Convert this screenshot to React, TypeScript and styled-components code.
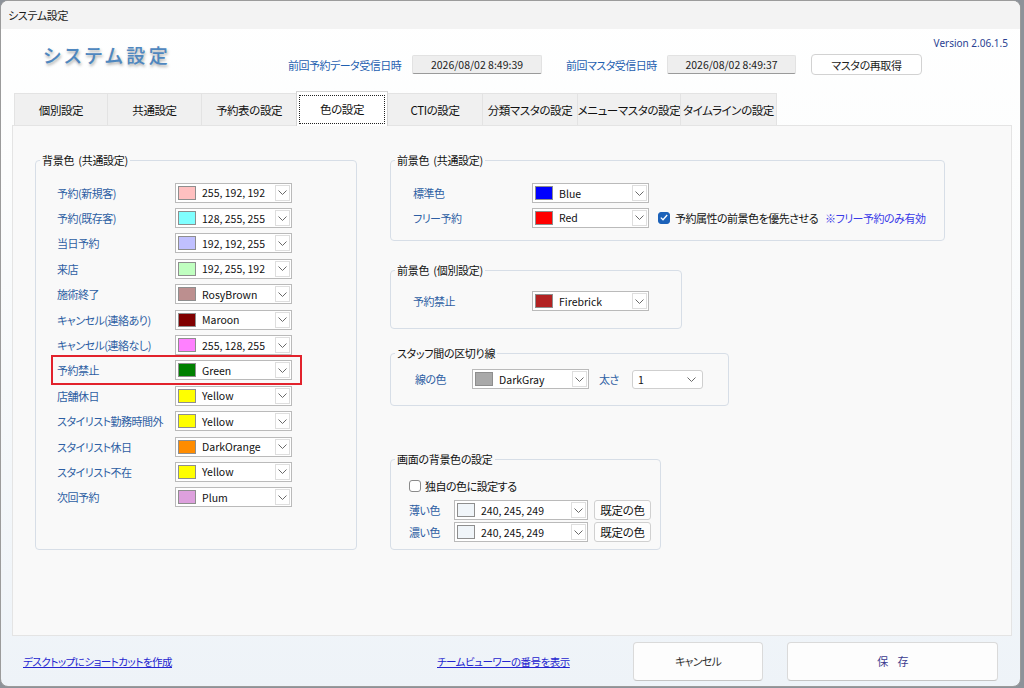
import React from "react";
import styled, { createGlobalStyle } from "styled-components";

const GlobalStyle = createGlobalStyle`
  html, body {
    margin: 0;
    padding: 0;
    background: #8d9299;
  }
  body {
    font-family: "Noto Sans CJK JP", "Noto Sans", sans-serif;
    font-feature-settings: "palt";
  }
  #root {
    width: 1024px;
    height: 688px;
  }
`;

const Window = styled.div`
  width: 1021px;
  height: 687px;
  box-sizing: border-box;
  border: 1px solid #9b9b9b;
  border-radius: 8px;
  overflow: hidden;
  display: flex;
  flex-direction: column;
  background: linear-gradient(#ffffff 0%, #fcfdfd 25%, #eef3f8 100%);
`;

const TitleBar = styled.div`
  height: 28px;
  flex: none;
  background: #f3f3f3;
  display: flex;
  align-items: center;
  padding-left: 7px;
  font-size: 11px;
  letter-spacing: -0.3px;
  color: #1a1a1a;
`;

const Header = styled.div`
  height: 63px;
  flex: none;
  display: flex;
  align-items: flex-start;
  padding-left: 42px;
`;

const AppTitle = styled.div`
  width: 245px;
  margin-top: 14px;
  font-size: 19px;
  line-height: 24px;
  letter-spacing: 3.5px;
  font-weight: 500;
  color: #4f87bf;
  text-shadow: 1px 2px 3px rgba(50, 50, 50, 0.4);
`;

const InfoRow = styled.div`
  display: flex;
  align-items: center;
  height: 21px;
  margin-top: 25px;
`;

const InfoLabel = styled.span<{ $w: number }>`
  width: ${(p) => p.$w}px;
  font-size: 11px;
  letter-spacing: -0.5px;
  color: #1f5fb0;
  white-space: nowrap;
`;

const InfoValue = styled.div<{ $w: number; $mr: number }>`
  width: ${(p) => p.$w}px;
  margin-right: ${(p) => p.$mr}px;
  height: 19px;
  box-sizing: border-box;
  background: #eeeeee;
  border: 1px solid #e2e2e2;
  border-bottom-color: #9a9a9a;
  border-radius: 2px;
  font-size: 10.5px;
  color: #222;
  display: flex;
  align-items: center;
  justify-content: center;
`;

const HeaderButton = styled.div`
  width: 111px;
  height: 21px;
  box-sizing: border-box;
  background: #fff;
  border: 1px solid #d2d2d2;
  border-radius: 4px;
  font-size: 11px;
  letter-spacing: -0.4px;
  color: #222;
  display: flex;
  align-items: center;
  justify-content: center;
`;

const Version = styled.div`
  margin-left: auto;
  margin-top: 6px;
  padding-right: 12px;
  font-size: 10px;
  line-height: 16px;
  color: #2a3f92;
  font-family: "Noto Sans", sans-serif;
`;

const TabStrip = styled.div`
  height: 33px;
  flex: none;
  display: flex;
  align-items: flex-end;
  padding-left: 13px;
`;

const Tab = styled.div<{ $w: number; $active?: boolean }>`
  width: ${(p) => p.$w}px;
  height: ${(p) => (p.$active ? 35 : 32)}px;
  box-sizing: border-box;
  margin-right: -1px;
  margin-bottom: ${(p) => (p.$active ? -1 : 0)}px;
  position: relative;
  z-index: ${(p) => (p.$active ? 2 : 1)};
  background: ${(p) => (p.$active ? "#ffffff" : "#f0f0f0")};
  border: 1px solid ${(p) => (p.$active ? "#d4d4d4" : "#e3e3e3")};
  border-bottom: none;
  display: flex;
  align-items: center;
  justify-content: center;
  font-size: 11.5px;
  letter-spacing: -0.4px;
  white-space: nowrap;
  color: #111;
`;

const FocusRect = styled.span`
  width: calc(100% - 4px);
  height: calc(100% - 5px);
  box-sizing: border-box;
  border: 1px dotted #222;
  display: flex;
  align-items: center;
  justify-content: center;
`;

const Panel = styled.div`
  margin-left: 11px;
  width: 1000px;
  height: 511px;
  flex: none;
  box-sizing: border-box;
  background: #f9f9f9;
  border: 1px solid #e4e4e4;
  display: flex;
  align-items: flex-start;
  gap: 33px;
  padding: 26px 0 0 22px;
`;

const Column = styled.div`
  display: flex;
  flex-direction: column;
`;

const Group = styled.fieldset<{ $w: number; $h: number; $mt?: number }>`
  margin: ${(p) => p.$mt ?? 0}px 0 0 0;
  min-width: 0;
  padding: 0;
  box-sizing: border-box;
  width: ${(p) => p.$w}px;
  height: ${(p) => p.$h}px;
  border: 1px solid #d7dee7;
  border-radius: 4px;
`;

const Legend = styled.legend`
  margin-left: 4px;
  padding: 0 2px;
  font-size: 11px;
  letter-spacing: -0.3px;
  word-spacing: 2px;
  line-height: 16px;
  color: #111;
`;

const GroupBody = styled.div<{ $pt: number; $pl: number }>`
  padding: ${(p) => p.$pt}px 0 0 ${(p) => p.$pl}px;
`;

const Row = styled.div<{ $cols: string; $h: number; $mark?: boolean }>`
  display: grid;
  width: fit-content;
  grid-template-columns: ${(p) => p.$cols};
  height: ${(p) => p.$h}px;
  align-items: center;
  position: relative;
  &::after {
    content: "";
    display: ${(p) => (p.$mark ? "block" : "none")};
    position: absolute;
    inset: -3px -10px -2px -6px;
    border: 2.5px solid #e2222c;
    pointer-events: none;
  }
`;

const FlexRow = styled.div<{ $h: number; $ml?: number }>`
  display: flex;
  align-items: center;
  height: ${(p) => p.$h}px;
  margin-left: ${(p) => p.$ml ?? 0}px;
`;

const Label = styled.span`
  font-size: 11px;
  letter-spacing: -0.5px;
  color: #2d5ea3;
  white-space: nowrap;
`;

const Combo = styled.div<{ $w: number }>`
  width: ${(p) => p.$w}px;
  height: 20px;
  box-sizing: border-box;
  border: 1px solid #bababa;
  background: #fff;
  display: flex;
  align-items: center;
  padding: 0 1px 0 2px;
`;

const Swatch = styled.span<{ $c: string }>`
  width: 18px;
  height: 14px;
  flex: none;
  box-sizing: border-box;
  border: 1px solid #8e8e8e;
  background: ${(p) => p.$c};
`;

const ComboText = styled.span`
  flex: 1;
  margin-left: 6px;
  font-size: 10.5px;
  color: #111;
  white-space: nowrap;
`;

const DropBtn = styled.span`
  width: 15px;
  height: 16px;
  flex: none;
  box-sizing: border-box;
  border: 1px solid #dedede;
  background: #fff;
  display: flex;
  align-items: center;
  justify-content: center;
`;

const FlatCombo = styled.div`
  width: 71px;
  height: 19px;
  margin-left: 10px;
  box-sizing: border-box;
  border: 1px solid #cfcfcf;
  border-radius: 3px;
  background: #fff;
  display: flex;
  align-items: center;
  justify-content: space-between;
  padding: 0 6px 0 5px;
  font-size: 10.5px;
  color: #111;
`;

const SideLabel = styled(Label)`
  margin-left: 10px;
  width: 23px;
`;

const CheckBox = styled.span<{ $on?: boolean }>`
  width: 12px;
  height: 12px;
  flex: none;
  box-sizing: border-box;
  border-radius: 3px;
  border: 1px solid ${(p) => (p.$on ? "#1c62b9" : "#8a8a8a")};
  background: ${(p) => (p.$on ? "#1c62b9" : "#fff")};
  display: flex;
  align-items: center;
  justify-content: center;
`;

const CheckText = styled.span<{ $ml: number }>`
  margin-left: ${(p) => p.$ml}px;
  font-size: 11px;
  letter-spacing: -0.5px;
  color: #111;
  white-space: nowrap;
`;

const Note = styled.span`
  margin-left: 7px;
  font-size: 11px;
  letter-spacing: -0.5px;
  color: #3a3ae8;
  white-space: nowrap;
`;

const SmallButton = styled.div`
  width: 57px;
  height: 20px;
  margin-left: 6px;
  box-sizing: border-box;
  background: #fdfdfd;
  border: 1px solid #d0d0d0;
  border-radius: 3px;
  font-size: 11.5px;
  letter-spacing: -0.3px;
  color: #111;
  display: flex;
  align-items: center;
  justify-content: center;
`;

const Footer = styled.div`
  flex: 1;
  display: flex;
  align-items: center;
  padding: 0 22px;
`;

const FooterLink = styled.a<{ $w?: number }>`
  ${(p) => (p.$w ? `width: ${p.$w}px;` : "flex: 1;")}
  font-size: 10.5px;
  letter-spacing: -0.5px;
  color: #2424cf;
  text-decoration: underline;
  white-space: nowrap;
  cursor: pointer;
`;

const ButtonGroup = styled.div`
  display: flex;
  gap: 24px;
`;

const FooterButton = styled.div<{ $w: number; $c: string }>`
  width: ${(p) => p.$w}px;
  height: 39px;
  box-sizing: border-box;
  background: #fdfdfd;
  border: 1px solid #dadada;
  border-bottom-color: #c4c4c4;
  border-radius: 4px;
  font-size: 11px;
  letter-spacing: -0.8px;
  color: ${(p) => p.$c};
  display: flex;
  align-items: center;
  justify-content: center;
`;

const Chevron = () => (
  <svg width="9" height="5" viewBox="0 0 9 5">
    <path d="M0.5 0.5 L4.5 4.5 L8.5 0.5" stroke="#6a6a6a" strokeWidth="1" fill="none" />
  </svg>
);

const Tick = () => (
  <svg width="8" height="7" viewBox="0 0 8 7">
    <path d="M0.8 3.6 L3 5.8 L7.2 1" stroke="#fff" strokeWidth="1.3" fill="none" />
  </svg>
);

const ColorCombo: React.FC<{ color: string; value: string; width?: number }> = ({ color, value, width = 117 }) => (
  <Combo $w={width}>
    <Swatch $c={color} />
    <ComboText>{value}</ComboText>
    <DropBtn>
      <Chevron />
    </DropBtn>
  </Combo>
);

const tabs = [
  { label: "個別設定", w: 94 },
  { label: "共通設定", w: 95 },
  { label: "予約表の設定", w: 96 },
  { label: "色の設定", w: 92, active: true },
  { label: "CTIの設定", w: 96 },
  { label: "分類マスタの設定", w: 96 },
  { label: "メニューマスタの設定", w: 104 },
  { label: "タイムラインの設定", w: 97 },
];

const background = [
  { label: "予約(新規客)", color: "#ffc0c0", value: "255, 192, 192" },
  { label: "予約(既存客)", color: "#80ffff", value: "128, 255, 255" },
  { label: "当日予約", color: "#c0c0ff", value: "192, 192, 255" },
  { label: "来店", color: "#c0ffc0", value: "192, 255, 192" },
  { label: "施術終了", color: "#bc8f8f", value: "RosyBrown" },
  { label: "キャンセル(連絡あり)", color: "#800000", value: "Maroon" },
  { label: "キャンセル(連絡なし)", color: "#ff80ff", value: "255, 128, 255" },
  { label: "予約禁止", color: "#008000", value: "Green", mark: true },
  { label: "店舗休日", color: "#ffff00", value: "Yellow" },
  { label: "スタイリスト勤務時間外", color: "#ffff00", value: "Yellow" },
  { label: "スタイリスト休日", color: "#ff8c00", value: "DarkOrange" },
  { label: "スタイリスト不在", color: "#ffff00", value: "Yellow" },
  { label: "次回予約", color: "#dda0dd", value: "Plum" },
];

export default function App() {
  return (
    <>
      <GlobalStyle />
      <Window>
        <TitleBar>システム設定</TitleBar>
        <Header>
          <AppTitle>システム設定</AppTitle>
          <InfoRow>
            <InfoLabel $w={124}>前回予約データ受信日時</InfoLabel>
            <InfoValue $w={130} $mr={24}>2026/08/02 8:49:39</InfoValue>
            <InfoLabel $w={101}>前回マスタ受信日時</InfoLabel>
            <InfoValue $w={129} $mr={15}>2026/08/02 8:49:37</InfoValue>
            <HeaderButton>マスタの再取得</HeaderButton>
          </InfoRow>
          <Version>Version 2.06.1.5</Version>
        </Header>

        <TabStrip>
          {tabs.map((t) => (
            <Tab key={t.label} $w={t.w} $active={t.active}>
              {t.active ? <FocusRect>{t.label}</FocusRect> : t.label}
            </Tab>
          ))}
        </TabStrip>

        <Panel>
          <Group $w={322} $h={398}>
            <Legend>背景色 (共通設定)</Legend>
            <GroupBody $pt={12} $pl={21}>
              {background.map((r) => (
                <Row key={r.label} $cols="118px 117px" $h={25.4} $mark={r.mark}>
                  <Label>{r.label}</Label>
                  <ColorCombo color={r.color} value={r.value} />
                </Row>
              ))}
            </GroupBody>
          </Group>

          <Column>
            <Group $w={555} $h={89}>
              <Legend>前景色 (共通設定)</Legend>
              <GroupBody $pt={13} $pl={22}>
                <Row $cols="119px auto" $h={24.5}>
                  <Label>標準色</Label>
                  <ColorCombo color="#0000ff" value="Blue" />
                </Row>
                <Row $cols="119px auto auto auto" $h={24.5}>
                  <Label>フリー予約</Label>
                  <ColorCombo color="#ff0000" value="Red" />
                  <FlexRow $h={20} $ml={9}>
                    <CheckBox $on>
                      <Tick />
                    </CheckBox>
                    <CheckText $ml={5}>予約属性の前景色を優先させる</CheckText>
                  </FlexRow>
                  <Note>※フリー予約のみ有効</Note>
                </Row>
              </GroupBody>
            </Group>

            <Group $w={292} $h={67} $mt={21}>
              <Legend>前景色 (個別設定)</Legend>
              <GroupBody $pt={11} $pl={22}>
                <Row $cols="119px auto" $h={24.5}>
                  <Label>予約禁止</Label>
                  <ColorCombo color="#b22222" value="Firebrick" />
                </Row>
              </GroupBody>
            </Group>

            <Group $w={339} $h={61} $mt={16}>
              <Legend>スタッフ間の区切り線</Legend>
              <GroupBody $pt={7} $pl={24}>
                <Row $cols="57px auto auto auto" $h={22}>
                  <Label>線の色</Label>
                  <ColorCombo color="#a9a9a9" value="DarkGray" />
                  <SideLabel>太さ</SideLabel>
                  <FlatCombo>
                    <span>1</span>
                    <Chevron />
                  </FlatCombo>
                </Row>
              </GroupBody>
            </Group>

            <Group $w={271} $h={99} $mt={45}>
              <Legend>画面の背景色の設定</Legend>
              <GroupBody $pt={11} $pl={18}>
                <FlexRow $h={16}>
                  <CheckBox />
                  <CheckText $ml={4}>独自の色に設定する</CheckText>
                </FlexRow>
                <Row $cols="45px auto auto" $h={20} style={{ marginTop: 6 }}>
                  <Label>薄い色</Label>
                  <ColorCombo color="#f0f5f9" value="240, 245, 249" width={134} />
                  <SmallButton>既定の色</SmallButton>
                </Row>
                <Row $cols="45px auto auto" $h={20} style={{ marginTop: 2 }}>
                  <Label>濃い色</Label>
                  <ColorCombo color="#f0f5f9" value="240, 245, 249" width={134} />
                  <SmallButton>既定の色</SmallButton>
                </Row>
              </GroupBody>
            </Group>
          </Column>
        </Panel>

        <Footer>
          <FooterLink $w={414}>デスクトップにショートカットを作成</FooterLink>
          <FooterLink>チームビューワーの番号を表示</FooterLink>
          <ButtonGroup>
            <FooterButton $w={130} $c="#333">キャンセル</FooterButton>
            <FooterButton $w={211} $c="#3b3b8f">保　存</FooterButton>
          </ButtonGroup>
        </Footer>
      </Window>
    </>
  );
}
